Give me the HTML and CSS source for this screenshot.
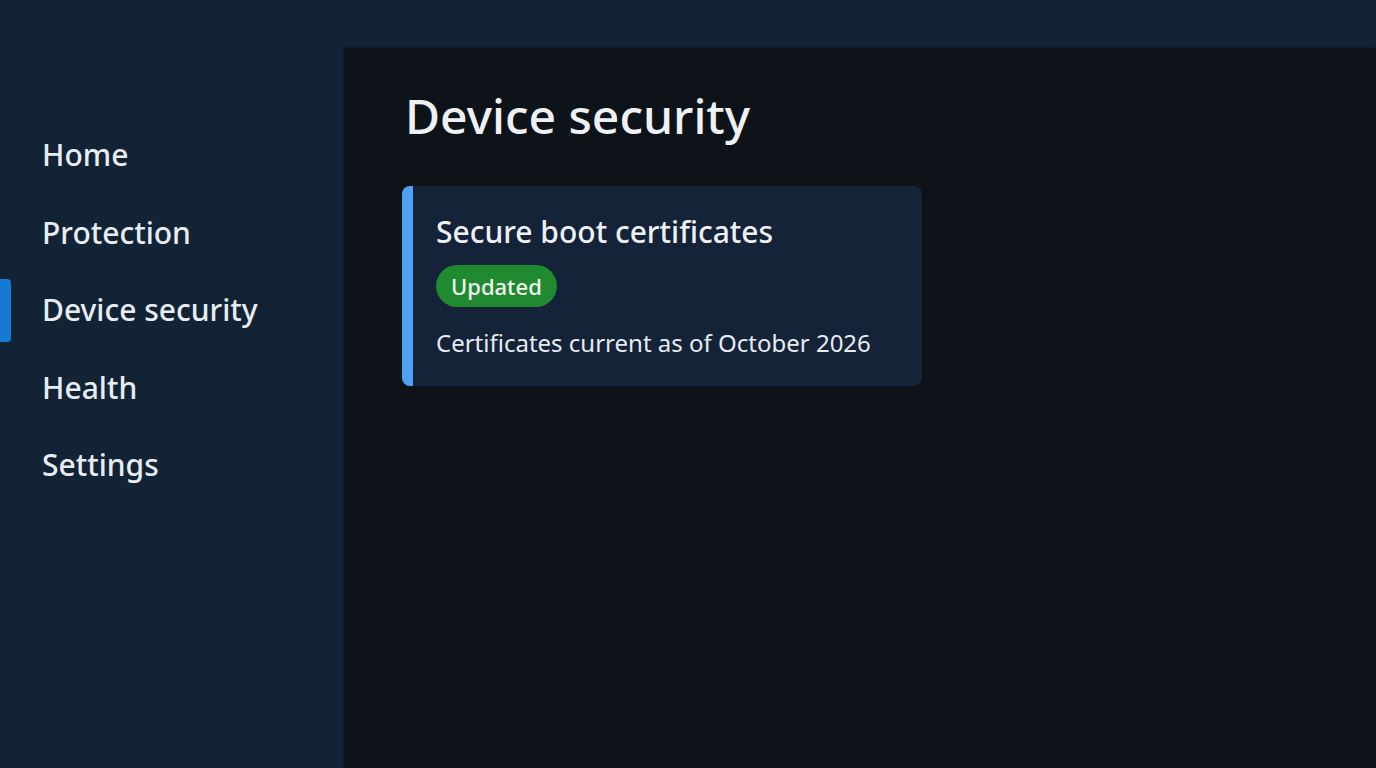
FILE: index.html
```html
<!DOCTYPE html>
<html lang="en">
<head>
<meta charset="utf-8">
<title>Device security</title>
<link rel="stylesheet" href="styles.css">
</head>
<body>
<div class="app">
  <nav class="sidebar">
    <a class="nav-item">Home</a>
    <a class="nav-item">Protection</a>
    <a class="nav-item active">Device security</a>
    <a class="nav-item">Health</a>
    <a class="nav-item">Settings</a>
  </nav>
  <main class="content">
    <h1 class="page-title">Device security</h1>
    <section class="card">
      <h2 class="card-title">Secure boot certificates</h2>
      <span class="badge">Updated</span>
      <p class="card-text">Certificates current as of October 2026</p>
    </section>
  </main>
</div>
</body>
</html>
```

FILE: styles.css
```css
* { box-sizing: border-box; }

html, body {
  margin: 0;
  height: 100%;
}

body {
  background: #132336;
  font-family: "Noto Sans", "Open Sans", sans-serif;
  color: #e8edf3;
  overflow: hidden;
}

.app {
  display: grid;
  grid-template-columns: 344px 1fr;
  height: 768px;
  padding-top: 48px;
}

.sidebar {
  display: flex;
  flex-direction: column;
  padding-top: 84px;
}

.nav-item {
  position: relative;
  display: block;
  height: 77.5px;
  padding-left: 42px;
  font-size: 30px;
  font-weight: 500;
  line-height: 46px;
  color: #e8edf3;
}

.nav-item.active::before {
  content: "";
  position: absolute;
  left: 0;
  top: -8px;
  width: 11px;
  height: 63px;
  background: #1679d2;
  border-radius: 0 4px 4px 0;
}

.content {
  background: #0e1319;
  padding: 35px 0 0 58px;
  box-shadow: -1px -1px 2px rgba(0, 0, 0, 0.3);
}

.page-title {
  margin: 0 0 37px 3px;
  font-size: 48px;
  font-weight: 500;
  line-height: 66px;
  color: #eef2f6;
}

.card {
  width: 520px;
  height: 200px;
  background: #142338;
  border-left: 11px solid #4ea1f5;
  border-radius: 8px;
  padding: 26px 0 0 23px;
}

.card-title {
  margin: 0;
  font-size: 30px;
  font-weight: 500;
  line-height: 40px;
  color: #eef2f6;
}

.badge {
  display: inline-block;
  margin-top: 13px;
  height: 42px;
  padding: 0 15px;
  border-radius: 21px;
  background: #1f8a2f;
  color: #f1f7f1;
  font-size: 22px;
  font-weight: 500;
  line-height: 42px;
}

.card-text {
  margin: 20px 0 0;
  font-size: 24px;
  line-height: 32px;
  color: #e6ebf1;
}
```
